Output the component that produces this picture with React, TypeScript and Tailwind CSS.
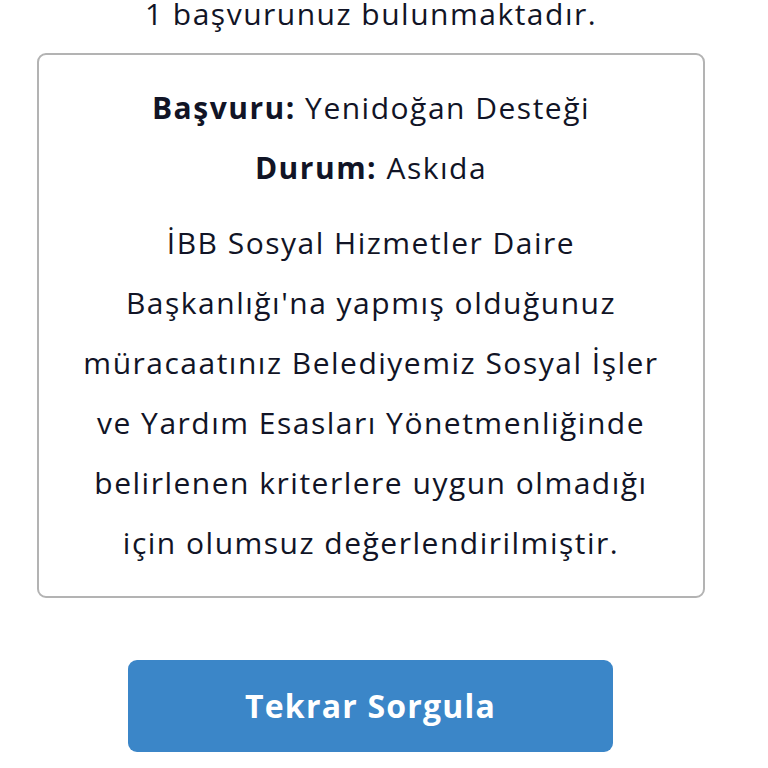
export default function App() {
    const font = { fontFamily: '"Open Sans", "Noto Sans", sans-serif' }

    return (
        <div className="min-h-[768px] w-[768px] bg-white overflow-hidden text-[#111426]" style={font}>
            <div className="-mt-[16px] flex w-[742px] flex-col">
                <p className="text-center text-[30px] leading-[60px] tracking-[1.5px]">1 başvurunuz bulunmaktadır.</p>

                <div className="mt-[9px] ml-[37px] w-[668px] rounded-[9px] border-2 border-[#b3b3b3] px-2 pt-[23px] pb-[23px] text-center text-[30px] leading-[60px] tracking-[1.5px]">
                    <p>
                        <span className="font-bold">Başvuru:</span> Yenidoğan Desteği
                    </p>
                    <p>
                        <span className="font-bold">Durum:</span> Askıda
                    </p>
                    <p className="mt-[15px]">
                        İBB Sosyal Hizmetler Daire
                        <br />
                        Başkanlığı'na yapmış olduğunuz
                        <br />
                        müracaatınız Belediyemiz Sosyal İşler
                        <br />
                        ve Yardım Esasları Yönetmenliğinde
                        <br />
                        belirlenen kriterlere uygun olmadığı
                        <br />
                        için olumsuz değerlendirilmiştir.
                    </p>
                </div>

                <button className="mt-[62px] ml-[128px] h-[92px] w-[485px] rounded-[9px] bg-[#3b86c8] text-[32px] font-bold tracking-[1.2px] text-white">
                    Tekrar Sorgula
                </button>
            </div>
        </div>
    )
}
